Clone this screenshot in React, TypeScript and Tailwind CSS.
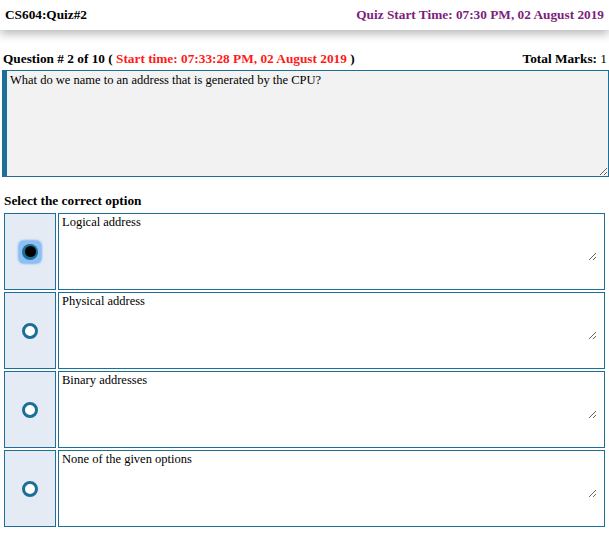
import React from 'react';

const serif = { fontFamily: '"Liberation Serif", "Times New Roman", serif' };

const options = [
  'Logical address',
  'Physical address',
  'Binary addresses',
  'None of the given options',
];

// Radio marker drawn by hand so it keeps the old-browser look
const Radio: React.FC<{ checked?: boolean }> = ({ checked = false }) => {
  if (checked) {
    return (
      <div className="w-[22px] h-[22px] rounded-[5px] bg-[#8cc0f5] flex items-center justify-center shadow-[0_0_2px_1px_rgba(90,160,240,0.7)]">
        <div className="w-[16px] h-[16px] rounded-full bg-[#1d6f98] flex items-center justify-center">
          <div className="w-[11px] h-[11px] rounded-full bg-black" />
        </div>
      </div>
    );
  }
  return <div className="w-[16px] h-[16px] rounded-full border-[3px] border-[#1d6f98] bg-white" />;
};

const App: React.FC = () => {
  return (
    <div className="w-[609px] h-[533px] overflow-hidden bg-white text-black" style={serif}>
      {/* Header */}
      <div className="h-[30px] flex items-center justify-between px-[5px] bg-white shadow-[0_4px_9px_rgba(0,0,0,0.28)] relative">
        <span className="text-[13.3px] font-bold">CS604:Quiz#2</span>
        <span className="text-[13.3px] font-bold text-[#7d1e7d]">Quiz Start Time: 07:30 PM, 02 August 2019</span>
      </div>

      {/* Question heading */}
      <div className="mt-[21px] flex items-center justify-between pl-[3px] pr-[2px] text-[13.3px] leading-[16px]">
        <span>
          <span className="font-bold">Question # 2 of 10 ( </span>
          <span className="font-bold text-[#ff1a1a]">Start time: 07:33:28 PM, 02 August 2019</span>
          <span className="font-bold"> )</span>
        </span>
        <span>
          <span className="font-bold">Total Marks: </span>1
        </span>
      </div>

      {/* Question text */}
      <div className="mt-[3px] pl-[2px]">
        <textarea
          readOnly
          defaultValue="What do we name to an address that is generated by the CPU?"
          className="block w-[607px] h-[107px] bg-[#f2f2f2] border-y border-r border-l-[5px] border-[#1d6f98] pl-[3px] pt-[2px] text-[12.5px] leading-[15px] outline-none"
          style={serif}
        />
      </div>

      <div className="mt-[16px] pl-[4px] text-[13.3px] font-bold leading-[16px]">Select the correct option</div>

      {/* Options */}
      <div className="mt-[4px] flex flex-col gap-[2px] pl-[4px]">
        {options.map((opt, i) => (
          <div key={i} className="flex gap-[2px] h-[77px]">
            <div className="w-[52px] bg-[#e4ebf5] border border-[#1d6f98] flex items-center justify-center">
              <Radio checked={i === 0} />
            </div>
            <div className="w-[547px] border border-[#1d6f98] bg-white">
              <textarea
                readOnly
                defaultValue={opt}
                className="block w-[538px] h-[47px] bg-white border-0 pl-[3px] pt-[1px] text-[12.5px] leading-[15px] outline-none"
                style={serif}
              />
            </div>
          </div>
        ))}
      </div>
    </div>
  );
};

export default App;
